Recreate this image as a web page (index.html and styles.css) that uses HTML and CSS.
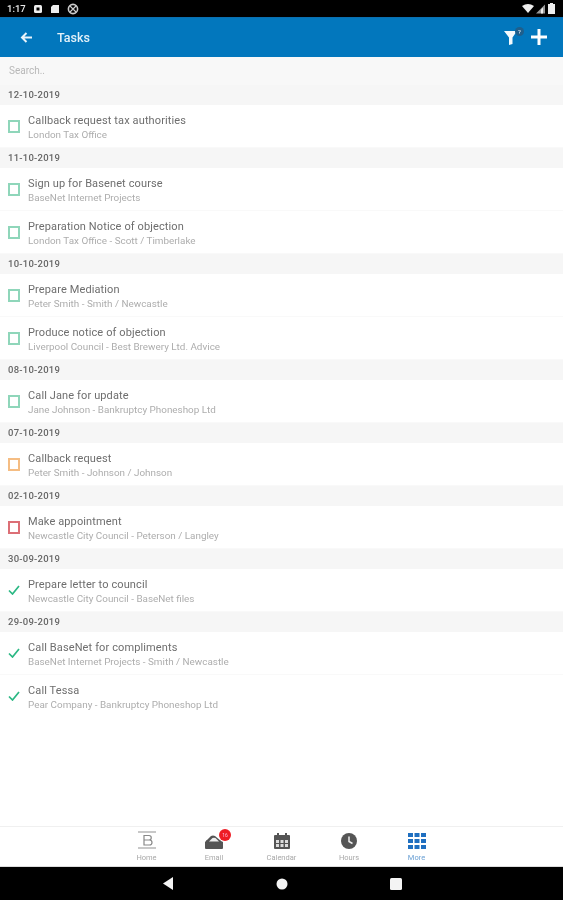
FILE: index.html
```html
<!DOCTYPE html>
<html lang="en">
<head>
<meta charset="utf-8">
<title>Tasks</title>
<link rel="stylesheet" href="styles.css">
</head>
<body>
<div class="screen">
  <div class="status">
    <div class="status-left">
      <span class="clock">1:17</span>
      <svg class="st" viewBox="0 0 10 10" width="10" height="10"><rect x="1" y="1" width="8" height="8" rx="1.5" fill="#eee"/><rect x="3.5" y="3.5" width="3" height="3" fill="#000"/></svg>
      <svg class="st" viewBox="0 0 10 10" width="10" height="10"><path d="M3 1h6v8H1V3z" fill="#eee"/></svg>
      <svg class="st" viewBox="0 0 12 12" width="12" height="12"><circle cx="6" cy="6" r="4.600" fill="none" stroke="#ccc" stroke-width="1.600"/><path d="M3 3l6 6M9 3l-6 6" stroke="#ccc" stroke-width="1.200"/></svg>
    </div>
    <div class="status-right">
      <svg viewBox="0 0 12 10" width="12" height="10"><path d="M0 2q6-4 12 0L6 9z" fill="#eee"/></svg>
      <svg viewBox="0 0 10 10" width="10" height="10"><path d="M0 9.500L9 .5v9z" fill="#999"/><path d="M5 5.500v4h2v-6z" fill="#eee"/></svg>
      <svg viewBox="0 0 7 11" width="7" height="11"><path d="M2 0h3v1h2v10H0V1h2z" fill="#eee"/></svg>
    </div>
  </div>
  <header class="appbar">
    <svg class="back" viewBox="0 0 12 11" width="12" height="11"><path d="M12 5.500H2M6.500 1 2 5.500 6.500 10" fill="none" stroke="#e8f4fb" stroke-width="2"/></svg>
    <h1 class="title">Tasks</h1>
    <div class="actions">
      <div class="filter">
        <svg viewBox="0 0 13 15" width="13" height="15"><path d="M0 1h13L8.500 7.500V14L5 15V7.500z" fill="#f4fafd"/></svg>
        <span class="filter-badge">?</span>
      </div>
      <svg class="plus" viewBox="0 0 16 16" width="16" height="16"><path d="M8 0v16M0 8h16" stroke="#fff" stroke-width="3"/></svg>
    </div>
  </header>
  <div class="search">Search..</div>
  <main class="list">
    <div class="date">12-10-2019</div>
    <div class="item"><span class="box green"></span><div class="txt"><div class="name">Callback request tax authorities</div><div class="sub">London Tax Office</div></div></div>
    <div class="date">11-10-2019</div>
    <div class="item"><span class="box green"></span><div class="txt"><div class="name">Sign up for Basenet course</div><div class="sub">BaseNet Internet Projects</div></div></div>
    <div class="item"><span class="box green"></span><div class="txt"><div class="name">Preparation Notice of objection</div><div class="sub">London Tax Office - Scott / Timberlake</div></div></div>
    <div class="date">10-10-2019</div>
    <div class="item"><span class="box green"></span><div class="txt"><div class="name">Prepare Mediation</div><div class="sub">Peter Smith - Smith / Newcastle</div></div></div>
    <div class="item"><span class="box green"></span><div class="txt"><div class="name">Produce notice of objection</div><div class="sub">Liverpool Council - Best Brewery Ltd. Advice</div></div></div>
    <div class="date">08-10-2019</div>
    <div class="item"><span class="box green"></span><div class="txt"><div class="name">Call Jane for update</div><div class="sub">Jane Johnson - Bankruptcy Phoneshop Ltd</div></div></div>
    <div class="date">07-10-2019</div>
    <div class="item"><span class="box orange"></span><div class="txt"><div class="name">Callback request</div><div class="sub">Peter Smith - Johnson / Johnson</div></div></div>
    <div class="date">02-10-2019</div>
    <div class="item"><span class="box red"></span><div class="txt"><div class="name">Make appointment</div><div class="sub">Newcastle City Council - Peterson / Langley</div></div></div>
    <div class="date">30-09-2019</div>
    <div class="item"><svg class="check" viewBox="0 0 12 10" width="12" height="10"><path d="M1 5.500 4.500 9 11 1" fill="none" stroke="#2bb884" stroke-width="1.700"/></svg><div class="txt"><div class="name">Prepare letter to council</div><div class="sub">Newcastle City Council - BaseNet files</div></div></div>
    <div class="date">29-09-2019</div>
    <div class="item"><svg class="check" viewBox="0 0 12 10" width="12" height="10"><path d="M1 5.500 4.500 9 11 1" fill="none" stroke="#2bb884" stroke-width="1.700"/></svg><div class="txt"><div class="name">Call BaseNet for compliments</div><div class="sub">BaseNet Internet Projects - Smith / Newcastle</div></div></div>
    <div class="item last"><svg class="check" viewBox="0 0 12 10" width="12" height="10"><path d="M1 5.500 4.500 9 11 1" fill="none" stroke="#2bb884" stroke-width="1.700"/></svg><div class="txt"><div class="name">Call Tessa</div><div class="sub">Pear Company - Bankruptcy Phoneshop Ltd</div></div></div>
  </main>
  <nav class="tabs">
    <div class="tab">
      <svg viewBox="0 0 18 18" width="18" height="18"><path d="M0 1h18M0 17h18" stroke="#c8c8c8" stroke-width="2"/><path d="M6 4.500h5a2 2 0 0 1 0 4.500H6zM6 9h5.500a2.500 2.500 0 0 1 0 5H6z" fill="none" stroke="#888" stroke-width="1.200"/></svg>
      <span class="lbl">Home</span>
    </div>
    <div class="tab">
      <span class="mail">
        <svg viewBox="0 0 18 14" width="18" height="14"><path d="M0 7 2 5 14 5l4 2v6a1 1 0 0 1-1 1H1a1 1 0 0 1-1-1z" fill="#555"/><path d="M1 6 6 1q2-1 4 0l6 5q-1 2-3 2H4Q2 8 1 6z" fill="#555"/><path d="M4 6.500 7.500 3q1.500-.5 3 0L14 6.500z" fill="#eee"/></svg>
        <span class="mail-badge">16</span>
      </span>
      <span class="lbl">Email</span>
    </div>
    <div class="tab">
      <svg viewBox="0 0 16 16" width="16" height="16"><path d="M1 2h14a1 1 0 0 1 1 1v12a1 1 0 0 1-1 1H1a1 1 0 0 1-1-1V3a1 1 0 0 1 1-1z" fill="#555"/><path d="M4 0v3M12 0v3" stroke="#555" stroke-width="2"/><path d="M2 7h3v7H2zM6.500 7h3v7h-3zM11 7h3v7h-3z" fill="#ddd"/><path d="M0 10.500h16" stroke="#555"/></svg>
      <span class="lbl">Calendar</span>
    </div>
    <div class="tab">
      <svg viewBox="0 0 16 16" width="16" height="16"><circle cx="8" cy="8" r="8" fill="#555"/><path d="M8 3.500V8.500l3.500 2" fill="none" stroke="#eee" stroke-width="1.500"/></svg>
      <span class="lbl">Hours</span>
    </div>
    <div class="tab active">
      <svg viewBox="0 0 18 16" width="18" height="16"><path d="M0 0h5v4H0zM6.500 0h5v4h-5zM13 0h5v4h-5zM0 6h5v4H0zM6.500 6h5v4h-5zM13 6h5v4h-5zM0 12h5v4H0zM6.500 12h5v4h-5zM13 12h5v4h-5z" fill="#1f6fc0"/></svg>
      <span class="lbl">More</span>
    </div>
  </nav>
  <div class="sysnav">
    <svg viewBox="0 0 12 13" width="12" height="13"><path d="M1 6.500 11 0v13z" fill="#f4f4f4"/></svg>
    <svg viewBox="0 0 12 12" width="12" height="12"><circle cx="6" cy="6" r="5.500" fill="#f4f4f4"/></svg>
    <svg viewBox="0 0 12 12" width="12" height="12"><rect width="12" height="12" rx="1.500" fill="#f4f4f4"/></svg>
  </div>
</div>
</body>
</html>
```

FILE: styles.css
```css
* { box-sizing: border-box; }
html, body { margin: 0; padding: 0; }
body { font-family: Roboto, "Noto Sans", sans-serif; background: #fff; }
.screen { width: 563px; height: 900px; display: flex; flex-direction: column; overflow: hidden; filter: blur(.4px); }

.status { height: 17px; background: #000; display: flex; justify-content: space-between; align-items: center; padding: 0 8px 0 7px; flex: none; }
.status-left, .status-right { display: flex; align-items: center; }
.status-left { gap: 7px; }
.status-right { gap: 2px; }
.clock { font-size: 9.500px; font-weight: 500; color: #e8e8e8; }

.appbar { height: 40px; background: #0277bd; border-top: 1px solid #0a6fb0; display: flex; align-items: center; padding: 0 16px 0 20px; flex: none; }
.back { flex: none; }
.title { margin: 0 0 0 25px; font-size: 12.500px; font-weight: 500; color: #e3f1f9; flex: 1; }
.actions { display: flex; align-items: center; gap: 14px; }
.filter { position: relative; display: flex; }
.filter-badge { position: absolute; right: -7px; top: -3px; width: 9px; height: 9px; border-radius: 50%; background: #1f5f8c; color: #fff; font-size: 6px; line-height: 9px; text-align: center; }
.plus { margin-bottom: 2px; }

.search { height: 28px; background: #f8f8f8; padding-left: 9px; font-size: 10px; line-height: 28px; color: #b8b8b8; flex: none; }

.list { flex: 1; background: #fff; min-height: 0; }
.date { height: 20px; background: #f6f6f6; padding-left: 8px; font-size: 9.500px; line-height: 20px; font-weight: 500; color: #666; letter-spacing: .25px; }
.item { height: 43px; display: flex; align-items: center; padding-left: 8px; border-bottom: 1px solid #f9f9f9; }
.item.last { border-bottom-color: transparent; }
.box { width: 12px; height: 13px; border: 2px solid; flex: none; margin-top: 1px; }
.green { border-color: #8fd6ba; }
.orange { border-color: #f5bd83; }
.red { border-color: #dc6f76; }
.check { flex: none; margin-top: -1px; }
.txt { margin-left: 8px; padding-top: 4px; }
.name { font-size: 11px; line-height: 14px; color: #6e6e6e; letter-spacing: .12px; }
.sub { font-size: 9.900px; line-height: 14px; color: #adadad; }

.tabs { height: 41px; flex: none; background: #fff; border-top: 1px solid #f0f0f0; border-bottom: 1px solid #ddd; display: flex; justify-content: center; }
.tab { width: 67.500px; display: flex; flex-direction: column; align-items: center; justify-content: flex-end; padding-bottom: 4px; gap: 4px; }
.lbl { font-size: 7.500px; line-height: 9px; color: #a8a8a8; }
.active .lbl { color: #6ba0d4; }
.mail { position: relative; display: flex; }
.mail-badge { position: absolute; right: -8px; top: -6px; width: 12px; height: 12px; border-radius: 50%; background: #ee1c25; color: #fbd; font-size: 5px; line-height: 12px; text-align: center; }

.sysnav { height: 33px; flex: none; background: #000; display: flex; justify-content: center; gap: 102px; align-items: center; }
```
